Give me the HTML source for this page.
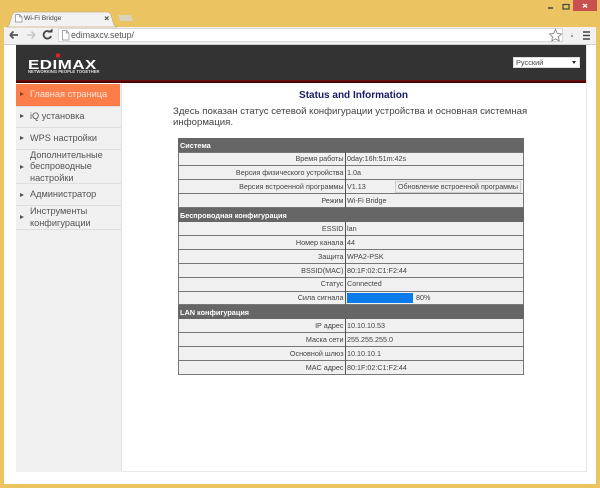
<!DOCTYPE html>
<html><head><meta charset="utf-8"><style>
html,body{margin:0;padding:0}
body{width:600px;height:488px;overflow:hidden;position:relative;background:#ecc361;font-family:"Liberation Sans","Noto Sans CJK JP",sans-serif}
.a{position:absolute;white-space:nowrap}
.row{position:absolute;left:179px;width:344px;height:12.9px;background:#f0f0f0}
.h{position:absolute;left:178px;width:346px;background:#666;color:#fff;font-weight:bold;font-size:7.3px;height:14px;line-height:15px;text-indent:2px}
.l{position:absolute;left:179px;width:164.5px;text-align:right;font-size:7.2px;line-height:10px;color:#444;white-space:nowrap}
.v{position:absolute;left:347px;font-size:7.2px;line-height:10px;color:#444;white-space:nowrap}
.m{position:absolute;left:30px;color:#555;font-size:9.2px;line-height:11.5px;white-space:nowrap}
.ar{position:absolute;left:20px;width:0;height:0;border-left:4px solid #555;border-top:2.5px solid transparent;border-bottom:2.5px solid transparent}
.sep{position:absolute;left:16px;width:105px;height:1px;background:#dedede}
</style></head><body>
<div class="a" style="left:4px;top:27px;width:592px;height:457px;background:#fff"></div>
<div class="a" style="left:4px;top:27px;width:592px;height:17px;background:#f1f1f1"></div>
<div class="a" style="left:4px;top:44px;width:592px;height:1px;background:#cfcfcf"></div>
<svg class="a" style="left:0;top:0" width="140" height="30"><path d="M6 27 Q9 27 10 22 L12 15 Q13 12 16 12 L107 12 Q110 12 111 15 L113 22 Q114 27 118 27Z" fill="#f2f2f2" stroke="#c9b27a" stroke-width=".7"/><path d="M118 15h13l2 6h-13z" fill="#d9d2bd"/><path d="M15.5 14.5h4l2.500 2.500v5h-6.500z M19.5 14.500v2.500h2.500" fill="#fff" stroke="#8a8a8a" stroke-width=".7"/><path d="M105 16.500l3.500 3.500m0-3.500l-3.500 3.500" stroke="#555" stroke-width="1.2"/></svg>
<div class="a" style="left:24px;top:14px;font-size:6.800px;line-height:10px;color:#444">Wi-Fi Bridge</div>
<svg class="a" style="left:0;top:27px" width="62" height="17"><path d="M10 8h8M10 8l3.500-3.500M10 8l3.500 3.500" stroke="#555" stroke-width="1.800" fill="none"/><path d="M35 8h-8M35 8l-3.500-3.500M35 8l-3.500 3.500" stroke="#c8c8c8" stroke-width="1.600" fill="none"/><path d="M50 5a3.800 3.800 0 1 0 1 4" stroke="#444" stroke-width="1.800" fill="none"/><path d="M47.500 5.500h5v-4z" fill="#444"/></svg>
<div class="a" style="left:58px;top:28px;width:505px;height:14px;background:#fff;border:1px solid #d8d8d8;box-sizing:border-box"></div>
<svg class="a" style="left:62px;top:30px" width="8" height="11"><path d="M.5.500h4l2.500 2.500v7h-6.500z M4.500.500v2.500h2.500" fill="#fff" stroke="#8a8a8a" stroke-width=".7"/></svg>
<div class="a" style="left:71px;top:28px;font-size:8.800px;line-height:14px;color:#555">edimaxcv.setup/</div>
<svg class="a" style="left:548px;top:28px" width="50" height="15"><path d="M7.500 1.500l1.800 3.900 4.200.5-3.100 2.900.8 4.200-3.700-2.100-3.700 2.100.8-4.200-3.100-2.900 4.200-.5z" fill="#fff" stroke="#888" stroke-width=".9"/><path d="M23 7h2v2h-2z" fill="#999"/><path d="M23.500 5.500h1" stroke="#bbb"/><path d="M35 4h7M35 7.500h7M35 11h7" stroke="#444" stroke-width="1.500"/></svg>
<svg class="a" style="left:540px;top:0" width="60" height="13"><path d="M8 8h5" stroke="#444" stroke-width="1.500"/><rect x="23" y="4.500" width="6" height="4.500" fill="none" stroke="#444" stroke-width="1.200"/><rect x="33" y="0" width="24" height="11" fill="#c9504f"/><path d="M43 4l4 3.500m0-3.500l-4 3.500" stroke="#fff" stroke-width="1.300"/></svg>
<div class="a" style="left:16px;top:45px;width:570px;height:35px;background:#333"></div>
<div class="a" style="left:16px;top:80px;width:570px;height:3px;background:linear-gradient(#7a0f0f,#300)"></div>
<div class="a" style="left:16px;top:84px;width:105px;height:388px;background:#f0f0f0"></div>
<div class="a" style="left:121px;top:84px;width:1px;height:388px;background:#e4e4e4"></div>
<div class="a" style="left:122px;top:471px;width:464px;height:1px;background:#e8e8e8"></div>
<div class="a" style="left:586px;top:45px;width:1px;height:427px;background:#e8e8e8"></div>
<svg class="a" style="left:27px;top:50px" width="76" height="27"><circle cx="31" cy="5.500" r="2.300" fill="#d8232a"/></svg>
<div class="a" style="left:28px;top:58px;font-size:13px;line-height:13px;font-weight:bold;color:#fff;letter-spacing:.4px;transform:scaleX(1.300);transform-origin:0 0">EDIMAX</div>
<div class="a" style="left:28px;top:69px;font-size:4.200px;line-height:6px;font-weight:bold;color:#ddd">NETWORKING PEOPLE TOGETHER</div>
<div class="a" style="left:513px;top:57px;width:67px;height:11px;background:#fff;border:1px solid #ddd;box-sizing:border-box;font-size:7.400px;line-height:9px;color:#444;text-indent:2px">Русский</div>
<div class="a" style="left:572px;top:61px;width:0;height:0;border-top:3px solid #222;border-left:2px solid transparent;border-right:2px solid transparent"></div>
<div class="a" style="left:16px;top:84px;width:104px;height:22px;background:#fb7d4a"></div>
<div class="ar" style="top:92px;border-left-color:#8a4020"></div>
<div class="m" style="top:89px;color:#fde5d6">Главная страница</div>
<div class="ar" style="top:114px"></div><div class="m" style="top:111px">iQ установка</div>
<div class="ar" style="top:136px"></div><div class="m" style="top:133px">WPS настройки</div>
<div class="ar" style="top:165px"></div><div class="m" style="top:149.500px">Дополнительные<br>беспроводные<br>настройки</div>
<div class="ar" style="top:193px"></div><div class="m" style="top:189px">Администратор</div>
<div class="ar" style="top:215px"></div><div class="m" style="top:206px">Инструменты<br>конфигурации</div>
<div class="sep" style="top:106px"></div><div class="sep" style="top:127px"></div><div class="sep" style="top:149px"></div><div class="sep" style="top:183px"></div><div class="sep" style="top:205px"></div><div class="sep" style="top:229px"></div>
<div class="a" style="left:253px;top:89px;width:201px;text-align:center;font-size:10px;line-height:13px;font-weight:bold;color:#1a1a66">Status and Information</div>
<div class="a" style="left:173px;top:107px;font-size:9.640px;line-height:10.700px;color:#444">Здесь показан статус сетевой конфигурации устройства и основная системная<br>информация.</div>
<div class="a" style="left:178px;top:138px;width:346px;height:236.500px;background:#777"></div>
<div class="row" style="top:152.500px"></div><div class="row" style="top:166.400px"></div><div class="row" style="top:180.300px"></div><div class="row" style="top:194.200px"></div>
<div class="row" style="top:222.300px"></div><div class="row" style="top:236.200px"></div><div class="row" style="top:250px"></div><div class="row" style="top:263.900px"></div><div class="row" style="top:277.700px"></div><div class="row" style="top:291.500px"></div>
<div class="row" style="top:319.300px"></div><div class="row" style="top:333.200px"></div><div class="row" style="top:347px"></div><div class="row" style="top:360.800px"></div>
<div class="a" style="left:345px;top:152px;width:1px;height:56px;background:#555"></div>
<div class="a" style="left:345px;top:222px;width:1px;height:83px;background:#555"></div>
<div class="a" style="left:345px;top:319px;width:1px;height:55px;background:#555"></div>
<div class="h" style="top:138px">Система</div>
<div class="h" style="top:208px">Беспроводная конфигурация</div>
<div class="h" style="top:305px">LAN конфигурация</div>
<div class="l" style="top:154px">Время работы</div><div class="v" style="top:154px">0day:16h:51m:42s</div>
<div class="l" style="top:168px">Версия физического устройства</div><div class="v" style="top:168px">1.0a</div>
<div class="l" style="top:182px">Версия встроенной программы</div><div class="v" style="top:182px">V1.13</div>
<div class="a" style="left:395px;top:181px;width:126px;height:12px;background:#eee;border:1px solid #ccc;box-sizing:border-box;font-size:7.100px;line-height:10px;color:#444;text-align:center">Обновление встроенной программы</div>
<div class="l" style="top:196px">Режим</div><div class="v" style="top:196px">Wi-Fi Bridge</div>
<div class="l" style="top:224px">ESSID</div><div class="v" style="top:224px">lan</div>
<div class="l" style="top:238px">Номер канала</div><div class="v" style="top:238px">44</div>
<div class="l" style="top:252px">Защита</div><div class="v" style="top:252px">WPA2-PSK</div>
<div class="l" style="top:265.500px">BSSID(MAC)</div><div class="v" style="top:265.500px">80:1F:02:C1:F2:44</div>
<div class="l" style="top:279px">Статус</div><div class="v" style="top:279px">Connected</div>
<div class="l" style="top:293px">Сила сигнала</div>
<div class="a" style="left:347px;top:292.500px;width:66px;height:10.500px;background:#0a7be8"></div>
<div class="v" style="left:416px;top:293px">80%</div>
<div class="l" style="top:321px">IP адрес</div><div class="v" style="top:321px">10.10.10.53</div>
<div class="l" style="top:335px">Маска сети</div><div class="v" style="top:335px">255.255.255.0</div>
<div class="l" style="top:349px">Основной шлюз</div><div class="v" style="top:349px">10.10.10.1</div>
<div class="l" style="top:363px">MAC адрес</div><div class="v" style="top:363px">80:1F:02:C1:F2:44</div>
</body></html>
